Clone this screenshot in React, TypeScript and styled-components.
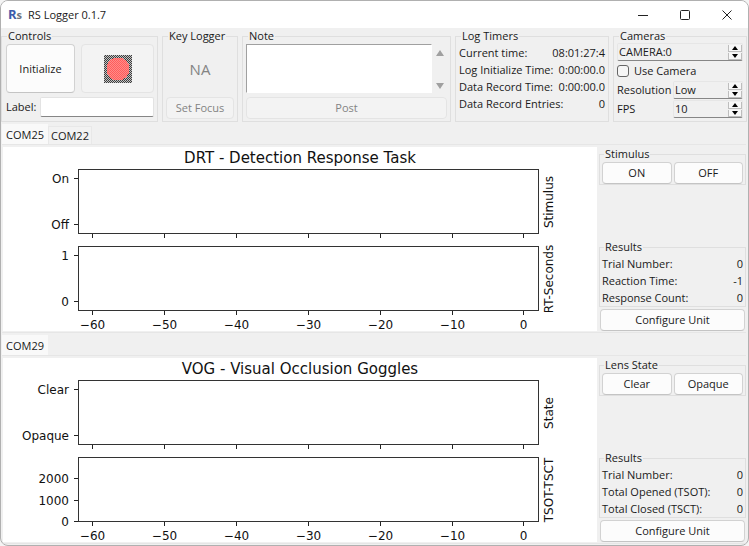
import React, { useState } from "react";
import styled, { createGlobalStyle } from "styled-components";

const GlobalStyle = createGlobalStyle`
  *, *::before, *::after { box-sizing: border-box; }
  body { margin: 0; background: #f4f4f4; }
  body, button, input, textarea, select {
    font-family: "Open Sans", "Noto Sans", sans-serif;
    font-size: 11px;
    line-height: 14px;
    color: #1a1a1a;
  }
`;

const Window = styled.div`
  display: flex;
  flex-direction: column;
  min-height: 100vh;
  background: #f0f0f0;
  border: 1px solid #b0b0b0;
  border-radius: 8px;
  overflow: hidden;
`;

const TitleBar = styled.header`
  display: flex;
  align-items: center;
  height: 27px;
  padding-left: 7px;
  background: #fff;
`;

const Logo = styled.span`
  width: 15px;
  font-size: 13px;
  font-weight: 700;
  line-height: 20px;
  white-space: nowrap;
  color: #3b5bab;
  small {
    font-size: 11px;
    color: #6e7480;
  }
`;

const Title = styled.h1`
  flex: 1;
  margin: 0 0 0 5px;
  font-size: 11px;
  font-weight: 400;
`;

const WindowButton = styled.button`
  display: flex;
  align-items: center;
  justify-content: center;
  width: 42px;
  height: 27px;
  padding: 0;
  border: 0;
  background: transparent;
`;

const Toolbar = styled.div`
  display: grid;
  grid-template-columns: 157px 76px minmax(120px, 1fr) 154px 134px;
  gap: 4px;
  padding: 1px 1px 0 0;
`;

const Group = styled.fieldset`
  min-width: 0;
  margin: 0;
  padding: 1px 3px 2px;
  border: 1px solid #dfdfdf;
`;

const CameraGroup = styled(Group)`
  padding-top: 0;
`;

const Legend = styled.legend`
  margin-left: 2px;
  padding: 0 1px;
  height: 14px;
`;

const Stack = styled.div<{ $gap?: number }>`
  display: flex;
  flex-direction: column;
  gap: ${(p) => p.$gap ?? 0}px;
`;

const Row = styled.div<{ $gap?: number }>`
  display: flex;
  align-items: center;
  gap: ${(p) => p.$gap ?? 4}px;
`;

const Button = styled.button<{ $tall?: boolean }>`
  display: flex;
  flex: 1 1 0;
  align-items: center;
  justify-content: center;
  min-height: ${(p) => (p.$tall ? 49 : 22)}px;
  padding: 0 4px;
  border: 1px solid #d2d2d2;
  border-bottom-color: #c4c4c4;
  border-radius: 4px;
  background: #fcfcfc;
  &:disabled {
    color: #838383;
    background: #f3f3f3;
    border-color: #e4e4e4;
  }
`;

const InitializeButton = styled(Button)`
  flex: 0 0 69px;
`;

const ControlsBody = styled(Stack)`
  padding-left: 1px;
`;

const TextInput = styled.input`
  flex: 1;
  min-width: 0;
  height: 20px;
  border: 1px solid #e3e3e3;
  border-bottom-color: #868686;
  border-radius: 2px;
  background: #fff;
`;

const KeyReadout = styled.output`
  display: flex;
  align-items: center;
  justify-content: center;
  height: 49px;
  font-size: 15px;
  color: #838383;
`;

const NoteRow = styled.div`
  display: flex;
  height: 49px;
`;

const NoteArea = styled.textarea`
  flex: 1;
  min-width: 0;
  resize: none;
  border: 1px solid #fff;
  border-top-color: #a0a0a0;
  border-left-color: #a0a0a0;
  background: #fff;
`;

const ScrollTrack = styled.div`
  display: flex;
  flex-direction: column;
  justify-content: space-between;
  align-items: center;
  width: 15px;
  padding: 6px 0 4px;
`;

const ArrowButton = styled.button`
  display: flex;
  padding: 0;
  border: 0;
  background: transparent;
`;

const Readings = styled.dl<{ $rowHeight: number }>`
  margin: 0;
  > div {
    display: flex;
    justify-content: space-between;
    height: ${(p) => p.$rowHeight}px;
    line-height: ${(p) => p.$rowHeight}px;
    white-space: nowrap;
  }
  dd { margin: 0; }
`;

const SpinBox = styled.div`
  display: flex;
  flex: 1;
  align-items: center;
  min-width: 0;
  height: 18px;
  border: 1px solid #e6e6e6;
  border-bottom-color: #868686;
  border-radius: 2px;
  input {
    flex: 1;
    min-width: 0;
    width: 0;
    height: 14px;
    padding: 0 1px;
    border: 0;
    background: transparent;
  }
`;

const SpinButtons = styled.div`
  display: flex;
  flex-direction: column;
  gap: 1px;
`;

const SpinButton = styled.button`
  display: flex;
  align-items: center;
  justify-content: center;
  width: 14px;
  height: 7px;
  padding: 0;
  border: 1px solid #bdbdbd;
  border-top: 0;
  background: #f7f7f7;
`;

const FieldLabel = styled.label`
  width: 52px;
`;

const CheckLabel = styled.label`
  display: flex;
  align-items: center;
  gap: 5px;
  height: 20px;
  input {
    appearance: none;
    width: 12px;
    height: 12px;
    margin: 0;
    border: 1px solid #666;
    border-radius: 3px;
    background: #f6f6f6;
  }
  input:checked { background: #0067c0; }
`;

const Notebook = styled.section`
  display: flex;
  flex-direction: column;
  padding: 2px 2px 0 1px;
`;

const TabList = styled.div`
  display: flex;
  align-items: flex-end;
  height: 20px;
`;

const Tab = styled.button<{ $active: boolean }>`
  height: ${(p) => (p.$active ? 20 : 18)}px;
  padding: 0 ${(p) => (p.$active ? 3 : 2)}px;
  border: 1px solid ${(p) => (p.$active ? "#f9f9f9" : "#e8e8e8")};
  border-bottom: 0;
  background: ${(p) => (p.$active ? "#f9f9f9" : "#f2f2f2")};
`;

const Pane = styled.div`
  display: grid;
  grid-template-columns: minmax(0, 1fr) 147px;
  gap: 2px;
  padding: 2px 0 1px 1px;
  border-top: 1px solid #e6e6e6;
  border-bottom: 1px solid #e6e6e6;
`;

const PlotFrame = styled.div`
  background: #fff;
  svg { display: block; width: 100%; height: auto; }
`;

const Side = styled.aside`
  display: flex;
  flex-direction: column;
  justify-content: space-between;
`;

const SideGroup = styled(Group)`
  padding: 1px 2px 0;
`;

const ConfigureRow = styled.div`
  display: flex;
  padding: 2px 1px 0;
`;

function RecordIcon() {
  return (
    <svg width="28" height="28" viewBox="0 0 28 28" shapeRendering="crispEdges" aria-label="Record">
      <defs>
        <pattern id="stipple" width="2" height="2" patternUnits="userSpaceOnUse">
          <rect width="1" height="1" fill="#c4c4c4" />
          <rect x="1" y="1" width="1" height="1" fill="#c4c4c4" />
        </pattern>
        <pattern id="stippleRed" width="2" height="2" patternUnits="userSpaceOnUse">
          <rect width="1" height="1" fill="#ff8c88" />
          <rect x="1" y="1" width="1" height="1" fill="#ff8c88" />
        </pattern>
      </defs>
      <rect width="28" height="28" fill="#3c3c3c" />
      <rect width="28" height="28" fill="url(#stipple)" />
      <circle cx="14" cy="14" r="11.5" fill="#ff5c5c" />
      <circle cx="14" cy="14" r="11.5" fill="url(#stippleRed)" />
    </svg>
  );
}

function Triangle({ down, width, height, color }: { down?: boolean; width: number; height: number; color: string }) {
  const points = down ? `0,0 ${width},0 ${width / 2},${height}` : `0,${height} ${width},${height} ${width / 2},0`;
  return (
    <svg width={width} height={height} aria-hidden="true">
      <polygon points={points} fill={color} />
    </svg>
  );
}

function Spin({ id, label, value }: { id: string; label?: string; value: string }) {
  return (
    <SpinBox>
      <input id={id} aria-label={label} defaultValue={value} />
      <SpinButtons>
        <SpinButton aria-label="Previous"><Triangle width={6} height={4} color="#000" /></SpinButton>
        <SpinButton aria-label="Next"><Triangle down width={6} height={4} color="#000" /></SpinButton>
      </SpinButtons>
    </SpinBox>
  );
}

type Reading = [string, string];

function ReadingList({ items, rowHeight }: { items: Reading[]; rowHeight: number }) {
  return (
    <Readings $rowHeight={rowHeight}>
      {items.map(([name, value]) => (
        <div key={name}><dt>{name}</dt><dd>{value}</dd></div>
      ))}
    </Readings>
  );
}

interface Axis { label: string; ticks: { y: number; text: string }[] }

const X_TICKS = ["−60", "−50", "−40", "−30", "−20", "−10", "0"];

function Plot({ title, axes }: { title: string; axes: Axis[] }) {
  return (
    <PlotFrame>
      <svg viewBox="0 0 594 184" role="img" aria-label={title} fontFamily="DejaVu Sans, sans-serif" fontSize="12" fill="#111">
        <text x="297" y="16" textAnchor="middle" fontSize="15">{title}</text>
        {axes.map((axis, i) => {
          const top = 22 + i * 77;
          return (
            <g key={axis.label}>
              <rect x="75.5" y={top + 0.5} width="460" height="64" fill="none" stroke="#333" />
              {X_TICKS.map((t, n) => {
                const x = Math.round(89 + n * 71.9) + 0.5;
                return (
                  <g key={t}>
                    <path d={`M${x} ${top + 65}v4`} stroke="#222" />
                    {i === 1 && <text x={x} y="182" textAnchor="middle">{t}</text>}
                  </g>
                );
              })}
              {axis.ticks.map((t) => (
                <g key={t.text}>
                  <path d={`M71 ${t.y + 0.5}h4`} stroke="#222" />
                  <text x="66" y={t.y + 5} textAnchor="end">{t.text}</text>
                </g>
              ))}
              <text transform={`translate(550 ${top + 33}) rotate(-90)`} textAnchor="middle">{axis.label}</text>
            </g>
          );
        })}
      </svg>
    </PlotFrame>
  );
}

interface DeviceProps {
  ports: string[];
  title: string;
  axes: Axis[];
  switchName: string;
  switches: string[];
  results: Reading[];
}

function Device({ ports, title, axes, switchName, switches, results }: DeviceProps) {
  const [active, setActive] = useState(ports[0]);
  return (
    <Notebook>
      <TabList role="tablist">
        {ports.map((p) => (
          <Tab key={p} role="tab" aria-selected={p === active} $active={p === active} onClick={() => setActive(p)}>{p}</Tab>
        ))}
      </TabList>
      <Pane role="tabpanel">
        <Plot title={title} axes={axes} />
        <Side>
          <SideGroup>
            <Legend>{switchName}</Legend>
            <Row $gap={2}>{switches.map((s) => <Button key={s}>{s}</Button>)}</Row>
          </SideGroup>
          <div>
            <SideGroup>
              <Legend>Results</Legend>
              <ReadingList items={results} rowHeight={17} />
            </SideGroup>
            <ConfigureRow><Button>Configure Unit</Button></ConfigureRow>
          </div>
        </Side>
      </Pane>
    </Notebook>
  );
}

export default function App() {
  return (
    <>
      <GlobalStyle />
      <Window>
        <TitleBar>
          <Logo aria-hidden="true">R<small>s</small></Logo>
          <Title>RS Logger 0.1.7</Title>
          <WindowButton aria-label="Minimize">
            <svg width="10" height="10"><path d="M0 5.5h10" stroke="#222" /></svg>
          </WindowButton>
          <WindowButton aria-label="Maximize">
            <svg width="10" height="10"><rect x="0.5" y="0.5" width="9" height="9" rx="1" fill="none" stroke="#222" /></svg>
          </WindowButton>
          <WindowButton aria-label="Close">
            <svg width="10" height="10"><path d="M0.5 0.5l9 9M9.5 0.5l-9 9" stroke="#222" /></svg>
          </WindowButton>
        </TitleBar>

        <Toolbar>
          <Group>
            <Legend>Controls</Legend>
            <ControlsBody $gap={4}>
              <Row $gap={6}>
                <InitializeButton $tall>Initialize</InitializeButton>
                <Button $tall disabled><RecordIcon /></Button>
              </Row>
              <Row>
                <label htmlFor="label">Label:</label>
                <TextInput id="label" />
              </Row>
            </ControlsBody>
          </Group>
          <Group>
            <Legend>Key Logger</Legend>
            <Stack $gap={4}>
              <KeyReadout>NA</KeyReadout>
              <Row><Button disabled>Set Focus</Button></Row>
            </Stack>
          </Group>
          <Group>
            <Legend>Note</Legend>
            <Stack $gap={4}>
              <NoteRow>
                <NoteArea aria-label="Note" />
                <ScrollTrack>
                  <ArrowButton aria-label="Scroll up"><Triangle width={8} height={6} color="#a0a0a0" /></ArrowButton>
                  <ArrowButton aria-label="Scroll down"><Triangle down width={8} height={6} color="#a0a0a0" /></ArrowButton>
                </ScrollTrack>
              </NoteRow>
              <Row><Button disabled>Post</Button></Row>
            </Stack>
          </Group>
          <Group>
            <Legend>Log Timers</Legend>
            <ReadingList
              rowHeight={17}
              items={[
                ["Current time:", "08:01:27:4"],
                ["Log Initialize Time:", "0:00:00.0"],
                ["Data Record Time:", "0:00:00.0"],
                ["Data Record Entries:", "0"],
              ]}
            />
          </Group>
          <CameraGroup>
            <Legend>Cameras</Legend>
            <Row><Spin id="camera" label="Camera" value="CAMERA:0" /></Row>
            <CheckLabel><input type="checkbox" />Use Camera</CheckLabel>
            <Stack $gap={1}>
              <Row><FieldLabel htmlFor="resolution">Resolution</FieldLabel><Spin id="resolution" value="Low" /></Row>
              <Row><FieldLabel htmlFor="fps">FPS</FieldLabel><Spin id="fps" value="10" /></Row>
            </Stack>
          </CameraGroup>
        </Toolbar>

        <Device
          ports={["COM25", "COM22"]}
          title="DRT - Detection Response Task"
          axes={[
            { label: "Stimulus", ticks: [{ y: 31, text: "On" }, { y: 77, text: "Off" }] },
            { label: "RT-Seconds", ticks: [{ y: 108, text: "1" }, { y: 154, text: "0" }] },
          ]}
          switchName="Stimulus"
          switches={["ON", "OFF"]}
          results={[["Trial Number:", "0"], ["Reaction Time:", "-1"], ["Response Count:", "0"]]}
        />
        <Device
          ports={["COM29"]}
          title="VOG - Visual Occlusion Goggles"
          axes={[
            { label: "State", ticks: [{ y: 31, text: "Clear" }, { y: 77, text: "Opaque" }] },
            { label: "TSOT-TSCT", ticks: [{ y: 120, text: "2000" }, { y: 142, text: "1000" }, { y: 163, text: "0" }] },
          ]}
          switchName="Lens State"
          switches={["Clear", "Opaque"]}
          results={[["Trial Number:", "0"], ["Total Opened (TSOT):", "0"], ["Total Closed (TSCT):", "0"]]}
        />
      </Window>
    </>
  );
}
